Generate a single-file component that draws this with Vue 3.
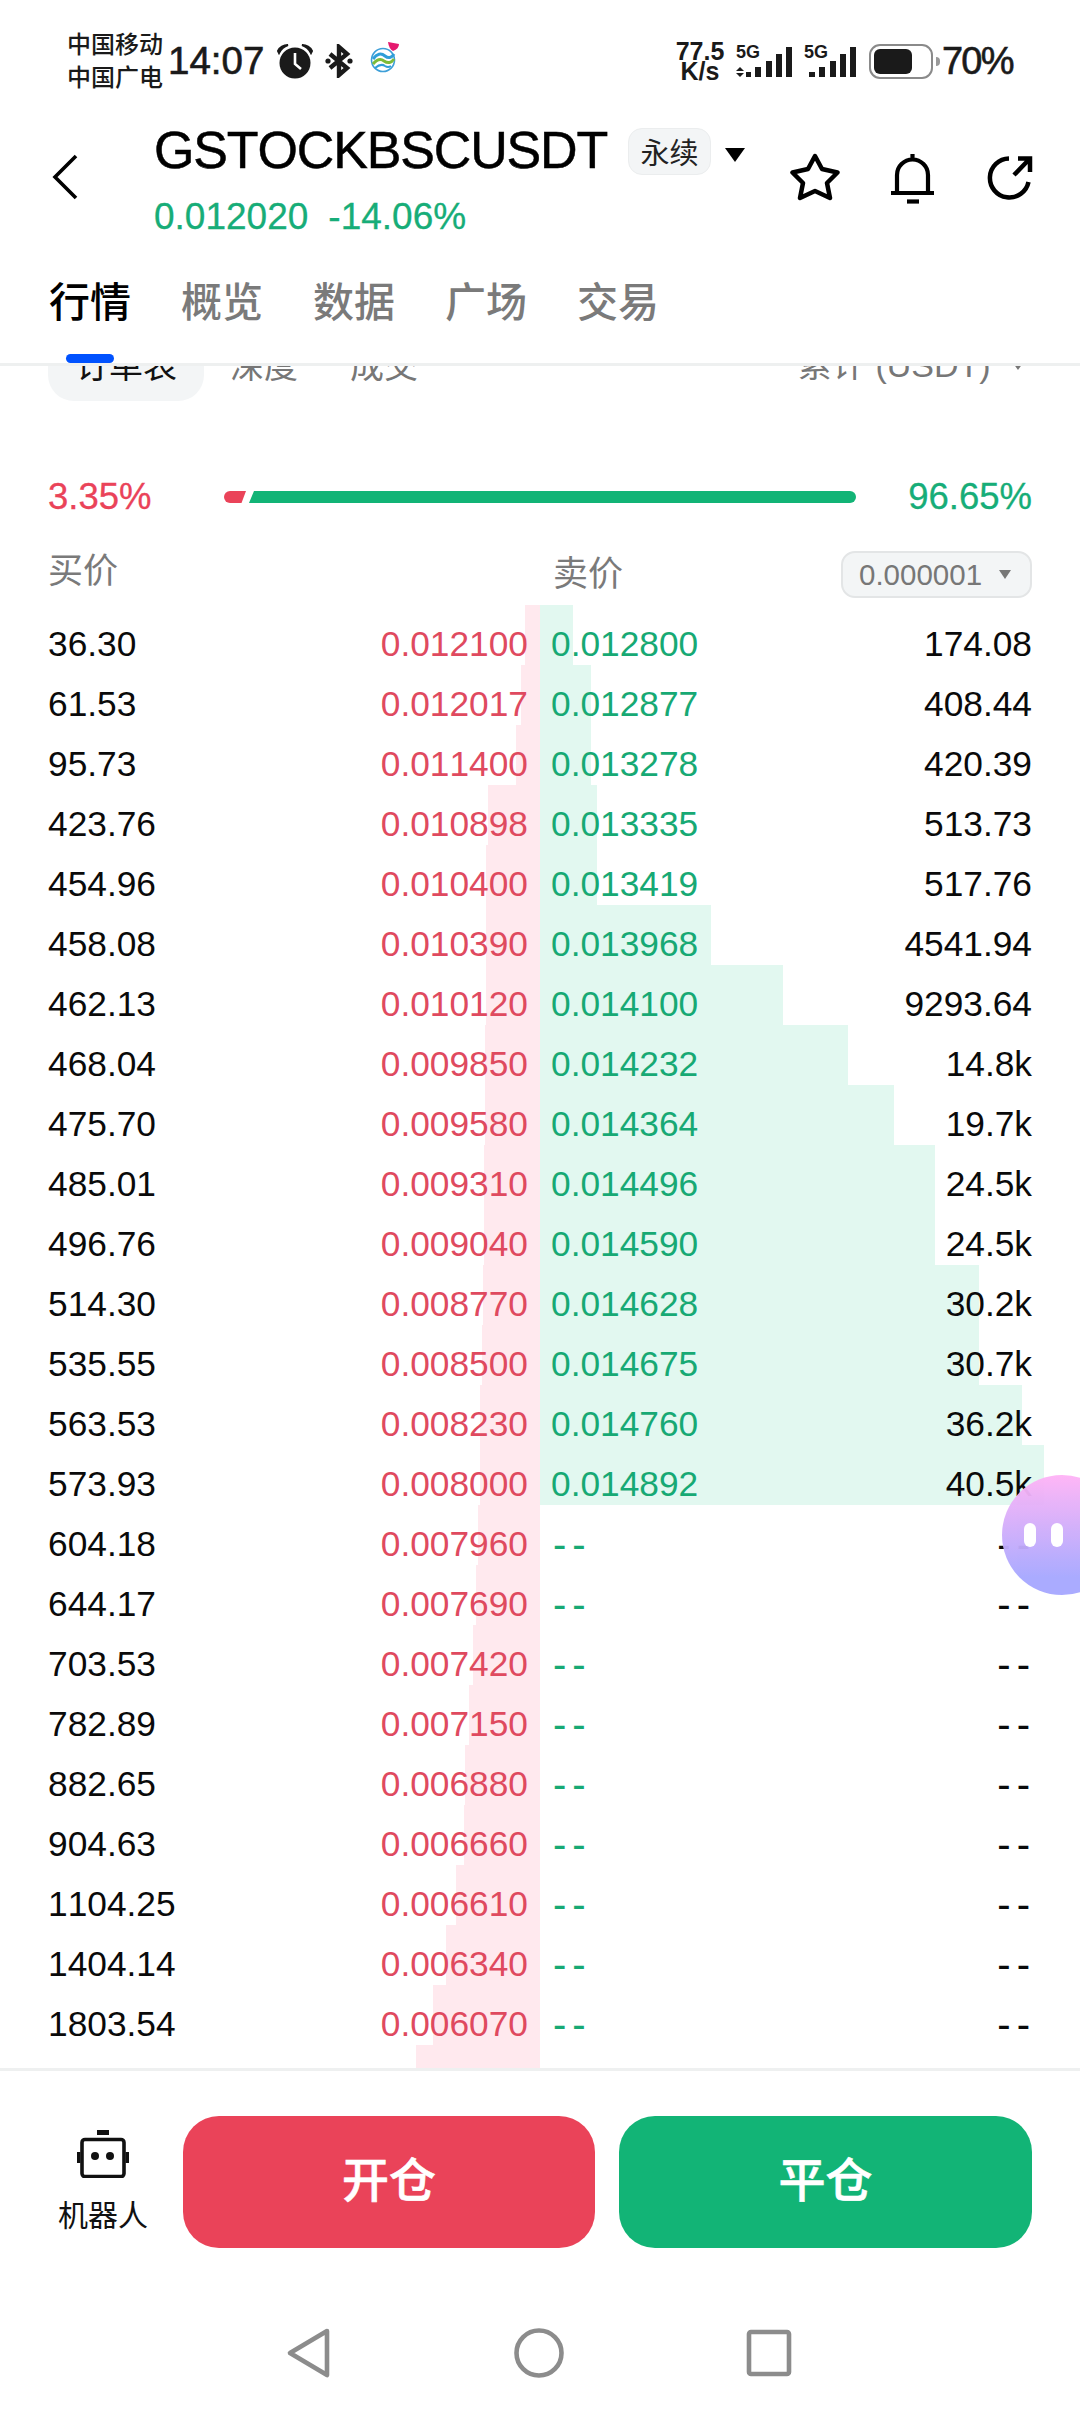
<script setup>
const rows = [
  ['36.30', '0.012100', '0.012800', '174.08', 525, 573],
  ['61.53', '0.012017', '0.012877', '408.44', 521, 591],
  ['95.73', '0.011400', '0.013278', '420.39', 516, 591],
  ['423.76', '0.010898', '0.013335', '513.73', 488, 597],
  ['454.96', '0.010400', '0.013419', '517.76', 486, 597],
  ['458.08', '0.010390', '0.013968', '4541.94', 486, 711],
  ['462.13', '0.010120', '0.014100', '9293.64', 486, 783],
  ['468.04', '0.009850', '0.014232', '14.8k', 485, 848],
  ['475.70', '0.009580', '0.014364', '19.7k', 485, 894],
  ['485.01', '0.009310', '0.014496', '24.5k', 484, 935],
  ['496.76', '0.009040', '0.014590', '24.5k', 484, 935],
  ['514.30', '0.008770', '0.014628', '30.2k', 483, 979],
  ['535.55', '0.008500', '0.014675', '30.7k', 482, 979],
  ['563.53', '0.008230', '0.014760', '36.2k', 480, 1022],
  ['573.93', '0.008000', '0.014892', '40.5k', 480, 1044],
  ['604.18', '0.007960', '--', '--', 478, 540],
  ['644.17', '0.007690', '--', '--', 476, 540],
  ['703.53', '0.007420', '--', '--', 473, 540],
  ['782.89', '0.007150', '--', '--', 469, 540],
  ['882.65', '0.006880', '--', '--', 465, 540],
  ['904.63', '0.006660', '--', '--', 464, 540],
  ['1104.25', '0.006610', '--', '--', 456, 540],
  ['1404.14', '0.006340', '--', '--', 446, 540],
  ['1803.54', '0.006070', '--', '--', 433, 540],
  ['', '', '', '', 416, 540]
]
const tabs = ['行情', '概览', '数据', '广场', '交易']
</script>

<template>
  <div class="page">
    <div class="status">
      <div class="carrier"><span>中国移动</span><span>中国广电</span></div>
      <span class="time">14:07</span>
      <svg class="alarm" width="40" height="36" viewBox="0 0 40 36">
        <circle cx="20" cy="20" r="15.5" fill="#1a1a1a" />
        <path d="M3 8 Q6 2 13 2 Q7 4 4 10Z M37 8 Q34 2 27 2 Q33 4 36 10Z" fill="#1a1a1a" stroke="#1a1a1a" stroke-width="2" />
        <path d="M20 10 V21 L26 26" fill="none" stroke="#fff" stroke-width="2.6" />
      </svg>
      <svg class="bt" width="28" height="34" viewBox="0 0 28 34">
        <path d="M5 10 L22 24 L14 31 V3 L22 10 L5 24" fill="none" stroke="#1a1a1a" stroke-width="4.4" />
        <circle cx="3" cy="17" r="2.6" fill="#1a1a1a" />
        <circle cx="25" cy="17" r="2.6" fill="#1a1a1a" />
      </svg>
      <svg class="logo" width="30" height="32" viewBox="0 0 30 32">
        <circle cx="13" cy="19" r="11.5" fill="#fff" stroke="#3d9fd8" stroke-width="1.6" />
        <path d="M3 18 Q9 10 15 15 Q20 19 24 13" fill="none" stroke="#2f9ed8" stroke-width="3" />
        <path d="M3 23 Q9 16 14 20 Q20 24 24 18" fill="none" stroke="#7cbb3a" stroke-width="3" />
        <path d="M5 27 Q11 22 15 25 Q18 27 21 25" fill="none" stroke="#2f9ed8" stroke-width="2" />
        <path d="M18 1 L29 3 Q29 8 23 10 Q19 8 18 1Z" fill="#e5196e" />
      </svg>
      <div class="speed"><span>77.5</span><span>K/s</span></div>
      <svg class="sig1" width="56" height="40" viewBox="0 0 56 40">
        <text x="0" y="17" class="g5">5G</text>
        <path d="M4 26 L8 30 H0Z M0 32 H8 L4 36Z" fill="#1a1a1a" />
        <rect x="10" y="31" width="5" height="5" />
        <rect x="19" y="26" width="6" height="10" />
        <rect x="30" y="20" width="6" height="16" />
        <rect x="40" y="13" width="6" height="23" />
        <rect x="50" y="6" width="6" height="30" />
      </svg>
      <svg class="sig2" width="53" height="40" viewBox="0 0 53 40">
        <text x="0" y="17" class="g5">5G</text>
        <rect x="5" y="31" width="6" height="5" />
        <rect x="15" y="26" width="6" height="10" />
        <rect x="26" y="20" width="6" height="16" />
        <rect x="36" y="13" width="6" height="23" />
        <rect x="46" y="6" width="6" height="30" />
      </svg>
      <div class="battery"><div class="fill"></div></div>
      <div class="nub"></div>
      <span class="pct">70%</span>
    </div>

    <div class="nav">
      <svg class="back" width="26" height="46" viewBox="0 0 26 46">
        <path d="M24 2 L3 23 L24 44" fill="none" stroke="#000" stroke-width="3.6" />
      </svg>
      <div class="titles">
        <div class="title-line">
          <span class="title">GSTOCKBSCUSDT</span>
          <span class="perp">永续</span>
          <i class="caret-black"></i>
        </div>
        <div class="price-line"><span>0.012020</span><span>-14.06%</span></div>
      </div>
      <div class="actions">
        <svg width="50" height="48" viewBox="0 0 50 48">
          <path d="M25 3 L32 16 L47.500 19.500 L37 30 L40 45 L25 38 L10 45 L13 30 L2.500 19.500 L18 16Z" fill="none" stroke="#000" stroke-width="4.500" stroke-linejoin="round" />
        </svg>
        <svg class="bell" width="46" height="52" viewBox="0 0 46 52">
          <path d="M23.500 2 V8 M8 41 V23 A15.500 15.500 0 0 1 39 23 V41" fill="none" stroke="#000" stroke-width="4.200" />
          <path d="M2 41 H45" stroke="#000" stroke-width="4.200" />
          <path d="M18 49.500 H30" stroke="#000" stroke-width="4.200" />
        </svg>
        <svg class="share" width="50" height="50" viewBox="0 0 50 50">
          <path d="M25 5.500 A19.500 19.500 0 1 0 44.500 29" fill="none" stroke="#000" stroke-width="4.500" />
          <path d="M30 22 L45 6.500 M34 5.500 H46 V19" fill="none" stroke="#000" stroke-width="4.500" />
        </svg>
      </div>
    </div>

    <div class="tabs">
      <span v-for="(t, i) in tabs" :key="t" class="tab" :class="{ on: i === 0 }">{{ t }}</span>
    </div>

    <div class="scroller">
      <div class="subtabs">
        <span class="pill"><span class="lift">订单表</span></span>
        <span class="sub first lift">深度</span>
        <span class="sub lift">成交</span>
        <span class="sum">累计 (USDT)</span>
        <i class="caret-small"></i>
      </div>

      <div class="ratio">
        <span class="r-left">3.35%</span>
        <svg width="632" height="12" viewBox="0 0 632 12">
          <path d="M6 0 H22 L17.500 12 H6 A6 6 0 0 1 6 0Z" fill="#ea4359" />
          <path d="M30 0 H626 A6 6 0 0 1 626 12 H25Z" fill="#12b476" />
        </svg>
        <span class="r-right">96.65%</span>
      </div>

      <div class="labels">
        <span class="buy">买价</span>
        <span class="sell">卖价</span>
        <div class="select"><span>0.000001</span><i class="caret-gray"></i></div>
      </div>

      <div class="book">
        <div v-for="(r, i) in rows" :key="i" class="row">
          <div class="band red" :style="{ left: r[4] + 'px', width: 540 - r[4] + 'px' }"></div>
          <div class="band green" :style="{ width: r[5] - 540 + 'px' }"></div>
          <div class="half lh">
            <span class="amt">{{ r[0] }}</span>
            <span class="bid">{{ r[1] }}</span>
          </div>
          <div class="half rh">
            <span class="ask" :class="{ 'dash-l': r[2] === '--' }">{{ r[2] }}</span>
            <span class="amt" :class="{ 'dash-r': r[3] === '--' }">{{ r[3] }}</span>
          </div>
        </div>
      </div>
    </div>

    <div class="footer">
      <div class="actions-row">
        <div class="robot">
          <svg width="52" height="48" viewBox="0 0 52 48">
            <rect x="20" y="0" width="12" height="5" fill="#111" />
            <rect x="5" y="9.500" width="42" height="37" rx="3" fill="none" stroke="#111" stroke-width="3.600" />
            <rect x="0" y="22" width="3.500" height="11" fill="#111" />
            <rect x="48.500" y="22" width="3.500" height="11" fill="#111" />
            <circle cx="18" cy="26" r="4" fill="#111" />
            <circle cx="33" cy="26" r="4" fill="#111" />
          </svg>
          <span>机器人</span>
        </div>
        <div class="btn open">开仓</div>
        <div class="btn close">平仓</div>
      </div>
      <div class="sysnav">
        <svg width="52" height="52" viewBox="0 0 52 52">
          <path d="M44 4 L7 26 L44 48Z" fill="none" stroke="#8c8c8c" stroke-width="4.600" stroke-linejoin="round" />
        </svg>
        <svg width="52" height="52" viewBox="0 0 52 52">
          <circle cx="26" cy="26" r="22.500" fill="none" stroke="#8c8c8c" stroke-width="4.600" />
        </svg>
        <svg width="52" height="52" viewBox="0 0 52 52">
          <rect x="6" y="5" width="40" height="42" rx="2" fill="none" stroke="#8c8c8c" stroke-width="4.600" />
        </svg>
      </div>
    </div>

    <div class="bot"><i></i><i></i></div>
  </div>
</template>

<style scoped>
.page {
  position: relative;
  width: 1080px;
  height: 2412px;
  overflow: hidden;
  background: #fff;
  color: #000;
  font-family: "Liberation Sans", "Noto Sans CJK SC", sans-serif;
  font-kerning: none;
}
.status {
  display: flex;
  align-items: center;
  height: 78px;
  padding: 22px 0 0 67px;
  color: #1a1a1a;
}
.carrier {
  display: flex;
  flex-direction: column;
  width: 96px;
  font-size: 24px;
  line-height: 33px;
  font-weight: 500;
}
.time {
  margin-left: 5px;
  width: 101px;
  font-size: 38.500px;
  -webkit-text-stroke: 0.6px #1a1a1a;
}
.alarm { margin-left: 6px; }
.bt { margin-left: 10px; }
.logo { margin-left: 17px; margin-top: -8px; }
.speed {
  display: flex;
  flex-direction: column;
  align-items: center;
  width: 50px;
  margin-left: 275px;
  font-size: 25px;
  line-height: 20px;
  font-weight: 700;
}
.sig1 { margin-left: 11px; fill: #1a1a1a; }
.sig2 { margin-left: 12px; fill: #1a1a1a; }
.g5 { font-size: 18px; font-weight: 700; fill: #1a1a1a; }
.battery {
  box-sizing: border-box;
  width: 64px;
  height: 35px;
  margin-left: 12px;
  padding: 3px;
  border: 2.5px solid #8a8a8a;
  border-radius: 11px;
}
.fill {
  width: 38px;
  height: 100%;
  border-radius: 6px;
  background: #1a1a1a;
}
.nub {
  width: 4px;
  height: 9px;
  margin-left: 3px;
  border-radius: 0 4px 4px 0;
  background: #999;
}
.pct {
  margin-left: 2px;
  font-size: 38px;
  letter-spacing: -1.800px;
  -webkit-text-stroke: 0.6px #1a1a1a;
}
.nav {
  display: flex;
  align-items: flex-start;
  height: 150px;
}
.back {
  margin: 54px 0 0 52px;
  flex: none;
}
.titles {
  margin: 20px 0 0 76px;
  width: 600px;
  flex: none;
}
.title-line {
  display: flex;
  align-items: center;
  height: 60px;
}
.title {
  font-size: 52px;
  line-height: 60px;
  letter-spacing: -1.150px;
  -webkit-text-stroke: 0.5px #000;
  white-space: nowrap;
}
.perp {
  display: flex;
  align-items: center;
  justify-content: center;
  box-sizing: border-box;
  width: 83px;
  height: 47px;
  margin-left: 21px;
  margin-top: 2px;
  border: 1.5px solid #ebedee;
  border-radius: 14px;
  background: #f3f5f6;
  font-size: 29px;
  color: #222;
}
.caret-black {
  width: 0;
  height: 0;
  margin-left: 14px;
  margin-top: 10px;
  border-left: 10px solid transparent;
  border-right: 10px solid transparent;
  border-top: 14px solid #000;
}
.price-line {
  display: flex;
  gap: 20px;
  margin-top: 15px;
  font-size: 37px;
  line-height: 44px;
  color: #17ad78;
  -webkit-text-stroke: 0.3px #17ad78;
}
.actions {
  display: flex;
  align-items: flex-start;
  margin: 53px 0 0 36px;
}
.bell { margin: -1px 0 0 49px; }
.share { margin: 0 0 0 49px; }
.tabs {
  position: relative;
  box-sizing: border-box;
  display: flex;
  gap: 50px;
  height: 116px;
  padding: 25px 0 0 49px;
  border-bottom: 3px solid #eef0f0;
  z-index: 2;
  background: #fff;
}
.tab {
  font-size: 41px;
  line-height: 56px;
  font-weight: 500;
  color: #7a7a7a;
}
.tab.on {
  position: relative;
  color: #000;
}
.tab.on::after {
  content: "";
  position: absolute;
  left: 17px;
  top: 79px;
  width: 48px;
  height: 9px;
  border-radius: 5px;
  background: #0052ff;
}
.scroller {
  height: 1702px;
  overflow: hidden;
}
.subtabs {
  display: flex;
  align-items: center;
  height: 68px;
  margin-top: -33px;
  padding: 0 48px;
  font-size: 34px;
  color: #777;
}
.lift { margin-top: -7px; }
.pill {
  display: flex;
  align-items: center;
  justify-content: center;
  width: 156px;
  height: 68px;
  border-radius: 26px;
  background: #f3f5f6;
  color: #111;
}
.sub { margin-left: 52px; }
.sub.first { margin-left: 26px; }
.sum { margin-left: 380px; margin-top: -10px; white-space: pre; }
.caret-small {
  width: 0;
  height: 0;
  margin-left: 22px;
  margin-top: -2px;
  border-left: 5px solid transparent;
  border-right: 5px solid transparent;
  border-top: 7px solid #777;
}
.ratio {
  display: flex;
  align-items: center;
  height: 60px;
  margin-top: 66px;
  padding: 0 48px;
  font-size: 36.500px;
}
.r-left { width: 176px; color: #ea4359; -webkit-text-stroke: 0.3px #ea4359; }
.r-right { margin-left: auto; color: #17ad78; -webkit-text-stroke: 0.3px #17ad78; }
.labels {
  display: flex;
  height: 47px;
  margin-top: 24px;
  padding: 0 48px;
  font-size: 35px;
  line-height: 40px;
  color: #7a7a7a;
}
.buy { width: 505px; }
.sell { margin-top: 3px; }
.select {
  box-sizing: border-box;
  display: flex;
  align-items: center;
  width: 191px;
  height: 47px;
  margin-left: auto;
  padding-left: 16px;
  border: 2px solid #e3e5e6;
  border-radius: 14px;
  background: #f3f5f6;
  font-size: 29.500px;
  color: #777;
}
.caret-gray {
  width: 0;
  height: 0;
  margin-left: 17px;
  border-left: 6.500px solid transparent;
  border-right: 6.500px solid transparent;
  border-top: 9px solid #777;
}
.book { margin-top: 7px; }
.row {
  position: relative;
  display: flex;
  height: 60px;
  font-size: 35.300px;
  line-height: 40px;
}
.band {
  position: absolute;
  top: 0;
  bottom: 0;
}
.band.red { background: #ffe9ee; }
.band.green { left: 540px; background: #e2f8f0; }
.half {
  position: relative;
  display: flex;
  justify-content: space-between;
  box-sizing: border-box;
  width: 540px;
  padding-top: 19px;
}
.lh { padding-left: 48px; padding-right: 12px; }
.rh { padding-left: 11px; padding-right: 48px; }
.amt { color: #0a0a0a; }
.bid { color: #df4a5f; }
.ask { color: #17a974; }
.dash-l { font-size: 40px; letter-spacing: 6px; margin-left: 2px; }
.dash-r { font-size: 40px; letter-spacing: 6px; margin-right: -4px; }
.footer {
  border-top: 3px solid #eef0f0;
}
.actions-row {
  display: flex;
  align-items: stretch;
  gap: 24px;
  height: 132px;
  margin-top: 45px;
  padding: 0 48px;
}
.robot {
  display: flex;
  flex-direction: column;
  align-items: center;
  width: 110px;
  margin-right: 1px;
  padding-top: 14px;
  font-size: 30px;
  line-height: 40px;
  color: #111;
}
.robot span { margin-top: 18px; }
.btn {
  display: flex;
  align-items: center;
  justify-content: center;
  box-sizing: border-box;
  padding-bottom: 12px;
  border-radius: 36px;
  font-size: 47px;
  font-weight: 500;
  -webkit-text-stroke: 0.6px #fff;
  color: #fff;
}
.open { width: 412px; flex: none; background: #ea4359; }
.close { flex: 1; background: #12b476; }
.sysnav {
  display: flex;
  gap: 178px;
  margin-top: 79px;
  padding-left: 283px;
}
.bot {
  position: absolute;
  left: 1002px;
  top: 1475px;
  display: flex;
  justify-content: flex-start;
  align-items: center;
  gap: 15px;
  box-sizing: border-box;
  width: 120px;
  height: 120px;
  padding-left: 22px;
  border-radius: 50%;
  background: linear-gradient(180deg, #ffb4f6 0%, #a7a8ff 85%);
  opacity: 0.96;
}
.bot i {
  width: 12px;
  height: 24px;
  border-radius: 6px;
  background: #fff;
}
</style>

<style>
body { margin: 0; background: #fff; }
</style>
